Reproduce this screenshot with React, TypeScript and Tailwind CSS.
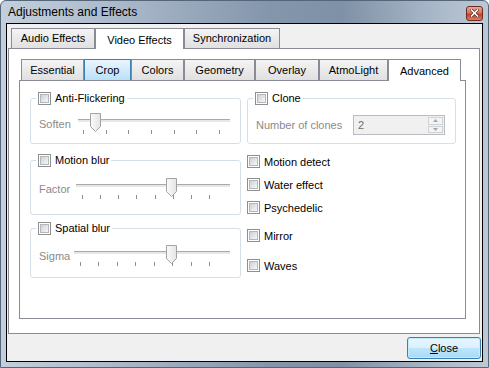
import React from 'react';

const outerTabs = [
  { label: 'Audio Effects', w: 'w-[84px]' },
  { label: 'Video Effects', w: 'w-[89px]', active: true },
  { label: 'Synchronization', w: 'w-[96px]' },
];

const innerTabs = [
  { label: 'Essential', w: 'w-[63px]' },
  { label: 'Crop', w: 'w-[47px]', hover: true },
  { label: 'Colors', w: 'w-[53px]' },
  { label: 'Geometry', w: 'w-[71px]' },
  { label: 'Overlay', w: 'w-[64px]' },
  { label: 'AtmoLight', w: 'w-[69px]' },
  { label: 'Advanced', w: 'w-[73px]', active: true },
];

function Check() {
  return (
    <span className="flex h-[13px] w-[13px] shrink-0 items-center justify-center border border-[#8e8f8f] bg-white">
      <span className="h-[9px] w-[9px] border border-[#b4b8bd] bg-gradient-to-br from-[#cdd1d6] to-[#f7f7f7]" />
    </span>
  );
}

function CheckRow({ label }: { label: string }) {
  return (
    <div className="flex h-[13px] items-center gap-[4px] leading-[14px]">
      <Check />
      <span>{label}</span>
    </div>
  );
}

function Tab({ label, w, active, hover, tall }: { label: string; w: string; active?: boolean; hover?: boolean; tall: string }) {
  if (active) {
    return (
      <div className={`${w} ${tall} relative z-10 -mb-px flex items-start justify-center border border-b-0 border-[#898c95] bg-white pt-[3px]`}>
        {label}
      </div>
    );
  }
  return (
    <div
      className={`${w} flex h-full items-center justify-center border border-b-0 ${
        hover
          ? 'border-[#3c7fb1] bg-gradient-to-b from-[#eaf6fd] to-[#b9e1f8]'
          : 'border-[#898c95] bg-gradient-to-b from-[#f4f4f4] to-[#e0e0e0]'
      }`}
    >
      {label}
    </div>
  );
}

function Slider({
  label,
  labelW,
  handle,
  tickPos,
  ticks,
}: {
  label: string;
  labelW: string;
  handle: string;
  tickPos: string;
  ticks: number;
}) {
  return (
    <div className="flex items-center">
      <span className={`${labelW} shrink-0 text-[#8a8a8a]`}>{label}</span>
      <div className="relative h-[22px] flex-1">
        <div className="absolute inset-x-0 top-[6px] h-[3px] border-t border-[#a9a9a9] bg-[#e6e8e8]" />
        <div className={`absolute top-[17px] flex h-[4px] justify-between ${tickPos}`}>
          {Array.from({ length: ticks }).map((_, i) => (
            <span key={i} className="w-px bg-[#8f8f8f]" />
          ))}
        </div>
        <svg className={`absolute top-0 ${handle}`} width="11" height="19" viewBox="0 0 11 19">
          <defs>
            <linearGradient id="thumb" x1="0" y1="0" x2="1" y2="0">
              <stop offset="0" stopColor="#fbfbfb" />
              <stop offset="1" stopColor="#e4e4e4" />
            </linearGradient>
          </defs>
          <path d="M0.5 0.5 H10.5 V13.5 L5.5 18.5 L0.5 13.5 Z" fill="url(#thumb)" stroke="#a3a3a3" />
        </svg>
      </div>
    </div>
  );
}

function Group({ label, children, className }: { label: string; children: React.ReactNode; className: string }) {
  return (
    <fieldset className={`rounded-[3px] border border-[#d5dfe5] ${className}`}>
      <legend className="ml-[5px] px-[2px]">
        <span className="flex items-center gap-[4px] leading-[14px]">
          <Check />
          <span>{label}</span>
        </span>
      </legend>
      {children}
    </fieldset>
  );
}

export default function App() {
  return (
    <div className="flex h-[368px] w-[489px] flex-col rounded-t-[6px] border border-[#55667a] bg-[linear-gradient(90deg,#c3cfdc,#a9b8c9_25%,#8496ac_55%,#7f91a7_70%,#a7b6c7_88%,#bcc8d5)] font-['Liberation_Sans',Arial,sans-serif] text-[11px] text-black">
      {/* title bar */}
      <div className="flex h-[22px] shrink-0 items-center justify-between pl-[7px] pr-[5px]">
        <span className="text-[12px] leading-[14px]">Adjustments and Effects</span>
        <div className="mt-[2px] flex h-[15px] w-[17px] items-center justify-center rounded-[3px] border border-[#6b2b21] bg-[linear-gradient(#eda693,#d9735a_45%,#c83e22_55%,#dc7c62)]">
          <svg width="9" height="8" viewBox="0 0 9 8">
            <path d="M1.5 1 L7.5 7 M7.5 1 L1.5 7" stroke="#5a2a22" strokeWidth="3" strokeLinecap="square" />
            <path d="M1.5 1 L7.5 7 M7.5 1 L1.5 7" stroke="#fff" strokeWidth="1.6" strokeLinecap="square" />
          </svg>
        </div>
      </div>

      {/* client */}
      <div className="mx-[5px] mb-[5px] flex flex-1 flex-col border border-black bg-[#f0f0f0]">
        <div className="mt-[4px] flex h-[20px] items-end pl-[4px]">
          {outerTabs.map((t) => (
            <Tab key={t.label} {...t} tall="h-[21px]" />
          ))}
        </div>
        <div className="ml-[1px] mr-[2px] flex h-[286px] flex-col border border-[#898c95] bg-white pl-[10px] pr-[13px] pt-[10px]">
          <div className="flex h-[21px] items-end pl-[2px]">
            {innerTabs.map((t) => (
              <Tab key={t.label} {...t} tall="h-[22px]" />
            ))}
          </div>
          <div className="flex h-[239px] gap-[6px] border border-[#898c95] bg-white pl-[10px] pt-[10px]">
            {/* left column */}
            <div className="flex w-[211px] flex-col">
              <Group label="Anti-Flickering" className="pb-[8px]">
                <div className="mt-[8px] pl-[8px] pr-[10px]">
                  <Slider label="Soften" labelW="w-[39px]" handle="left-[12px]" tickPos="left-[5px] right-[10px]" ticks={7} />
                </div>
              </Group>
              <Group label="Motion blur" className="mt-[9px] pb-[14px]">
                <div className="mt-[11px] pl-[8px] pr-[10px]">
                  <Slider label="Factor" labelW="w-[37px]" handle="left-[90px]" tickPos="left-[6px] right-[20px]" ticks={8} />
                </div>
              </Group>
              <Group label="Spatial blur" className="mt-[6px] pb-[10px]">
                <div className="mt-[10px] pl-[8px] pr-[10px]">
                  <Slider label="Sigma" labelW="w-[35px]" handle="left-[92px]" tickPos="left-[6px] right-[20px]" ticks={8} />
                </div>
              </Group>
            </div>

            {/* right column */}
            <div className="flex w-[209px] flex-col">
              <Group label="Clone" className="pb-[8px]">
                <div className="mt-[10px] flex items-center justify-between pl-[8px] pr-[10px]">
                  <span className="text-[#8a8a8a]">Number of clones</span>
                  <div className="flex h-[20px] w-[92px] items-center justify-between border border-[#b9bdc1] bg-[#f0f0f0] pl-[4px] pr-px">
                    <span className="text-[#6d6d6d]">2</span>
                    <div className="flex h-[16px] w-[15px] flex-col gap-px">
                      <div className="flex flex-1 items-center justify-center border border-[#d0d3d6] bg-[#f4f4f4]">
                        <svg width="5" height="3" viewBox="0 0 5 3"><path d="M0 3 L2.5 0 L5 3 Z" fill="#a6a6a6" /></svg>
                      </div>
                      <div className="flex flex-1 items-center justify-center border border-[#d0d3d6] bg-[#f4f4f4]">
                        <svg width="5" height="3" viewBox="0 0 5 3"><path d="M0 0 L2.5 3 L5 0 Z" fill="#a6a6a6" /></svg>
                      </div>
                    </div>
                  </div>
                </div>
              </Group>
              <div className="mt-[11px] flex flex-col">
                <CheckRow label="Motion detect" />
                <div className="mt-[10px]"><CheckRow label="Water effect" /></div>
                <div className="mt-[10px]"><CheckRow label="Psychedelic" /></div>
                <div className="mt-[15px]"><CheckRow label="Mirror" /></div>
                <div className="mt-[17px]"><CheckRow label="Waves" /></div>
              </div>
            </div>
          </div>
        </div>

        {/* buttons */}
        <div className="flex flex-1 items-start justify-end pr-px pt-[3px]">
          <button className="flex h-[22px] w-[74px] items-center justify-center rounded-[3px] border border-[#3c7fb1] bg-[linear-gradient(#eaf6fd,#d9f0fc_50%,#bee6fd_50%,#a7d9f5)] leading-[14px] shadow-[inset_0_0_0_1px_#c2ecfc]">
            <span>
              <span className="underline">C</span>lose
            </span>
          </button>
        </div>
      </div>
    </div>
  );
}
